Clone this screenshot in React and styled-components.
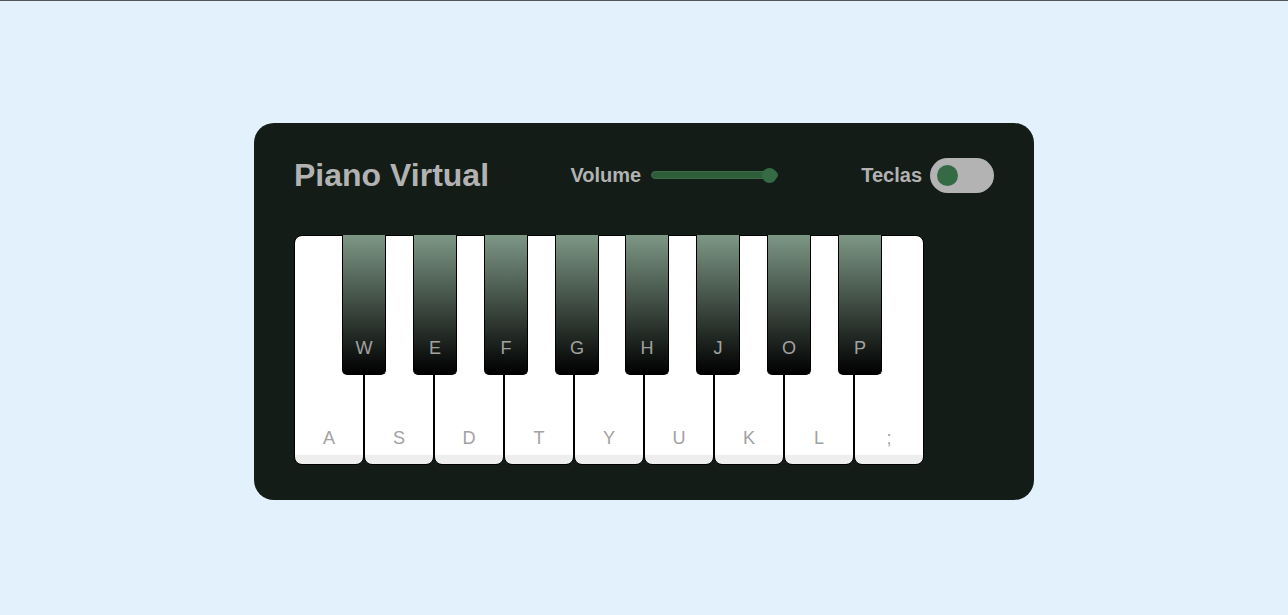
import React, { useState } from 'react'
import styled, { createGlobalStyle } from 'styled-components'

const GlobalStyle = createGlobalStyle`
  * {
    margin: 0;
    padding: 0;
    box-sizing: border-box;
  }
  body {
    background: #e3f1fc;
    font-family: "Liberation Sans", Arial, sans-serif;
    border-top: 1px solid #555;
  }
`

const Page = styled.div`
  min-height: 614px;
  display: flex;
  align-items: center;
  justify-content: center;
  padding-top: 6px;
`

const Wrapper = styled.div`
  width: 780px;
  padding: 35px 40px;
  border-radius: 20px;
  background: #131c16;
`

const Header = styled.header`
  display: flex;
  align-items: center;
  justify-content: space-between;
  color: #b2b2b2;
`

const Title = styled.h2`
  font-size: 2rem;
  font-weight: 700;
  line-height: 35px;
`

const Column = styled.div`
  display: flex;
  align-items: center;
  font-size: 1.25rem;
  font-weight: 700;
`

const Label = styled.span`
  margin-right: ${p => p.$gap}px;
`

const Slider = styled.input`
  -webkit-appearance: none;
  appearance: none;
  width: 127px;
  height: 8px;
  border-radius: 5px;
  background: #2d5d39;
  border: 1px solid #3a6a46;
  outline: none;
  margin-right: 83px;

  &::-webkit-slider-thumb {
    -webkit-appearance: none;
    appearance: none;
    width: 15px;
    height: 15px;
    border-radius: 50%;
    background: #346b45;
    border: none;
  }
`

const Toggle = styled.button`
  width: 64px;
  height: 35px;
  border: none;
  border-radius: 30px;
  background: #b3b3b3;
  padding: 0 7px;
  display: flex;
  align-items: center;
  justify-content: ${p => (p.$on ? 'flex-start' : 'flex-end')};
  cursor: pointer;

  &::before {
    content: '';
    width: 21px;
    height: 21px;
    border-radius: 50%;
    background: #346b45;
  }
`

const Keys = styled.ul`
  display: flex;
  list-style: none;
  margin-top: 42px;
`

const Key = styled.li`
  position: relative;
  text-transform: uppercase;
  user-select: none;
  cursor: pointer;

  span {
    position: absolute;
    left: 0;
    bottom: 15px;
    width: 100%;
    text-align: center;
    font-size: 1.13rem;
    color: #a2a2a2;
  }
`

const WhiteKey = styled(Key)`
  width: 70px;
  height: 230px;
  border-radius: 8px;
  border: 1px solid #000;
  background: linear-gradient(#fff 96%, #eee 4%);
`

const BlackKey = styled(Key)`
  z-index: 2;
  width: 44px;
  height: 140px;
  margin: 0 ${p => -22 - p.$shift}px 0 ${p => -22 + p.$shift}px;
  border: 1px solid #000;
  border-top: none;
  border-radius: 0 0 5px 5px;
  background: linear-gradient(#7d9785, #000);
`

const whites = ['a', 's', 'd', 't', 'y', 'u', 'k', 'l', ';']
const blacks = ['w', 'e', 'f', 'g', 'h', 'j', 'o', 'p']

export default function App() {
  const [showKeys, setShowKeys] = useState(true)
  const [volume, setVolume] = useState(1)

  return (
    <>
      <GlobalStyle />
      <Page>
        <Wrapper>
          <Header>
            <Title>Piano Virtual</Title>
            <Column>
              <Label $gap={10}>Volume</Label>
              <Slider
                type="range"
                min="0"
                max="1"
                step="any"
                value={volume}
                onChange={e => setVolume(e.target.value)}
              />
              <Label $gap={8}>Teclas</Label>
              <Toggle $on={showKeys} onClick={() => setShowKeys(!showKeys)} />
            </Column>
          </Header>
          <Keys>
            {whites.map((w, i) => (
              <React.Fragment key={w}>
                <WhiteKey>{showKeys && <span>{w}</span>}</WhiteKey>
                {blacks[i] && (
                  <BlackKey $shift={Math.round((i * 6) / 7)}>
                    {showKeys && <span>{blacks[i]}</span>}
                  </BlackKey>
                )}
              </React.Fragment>
            ))}
          </Keys>
        </Wrapper>
      </Page>
    </>
  )
}
